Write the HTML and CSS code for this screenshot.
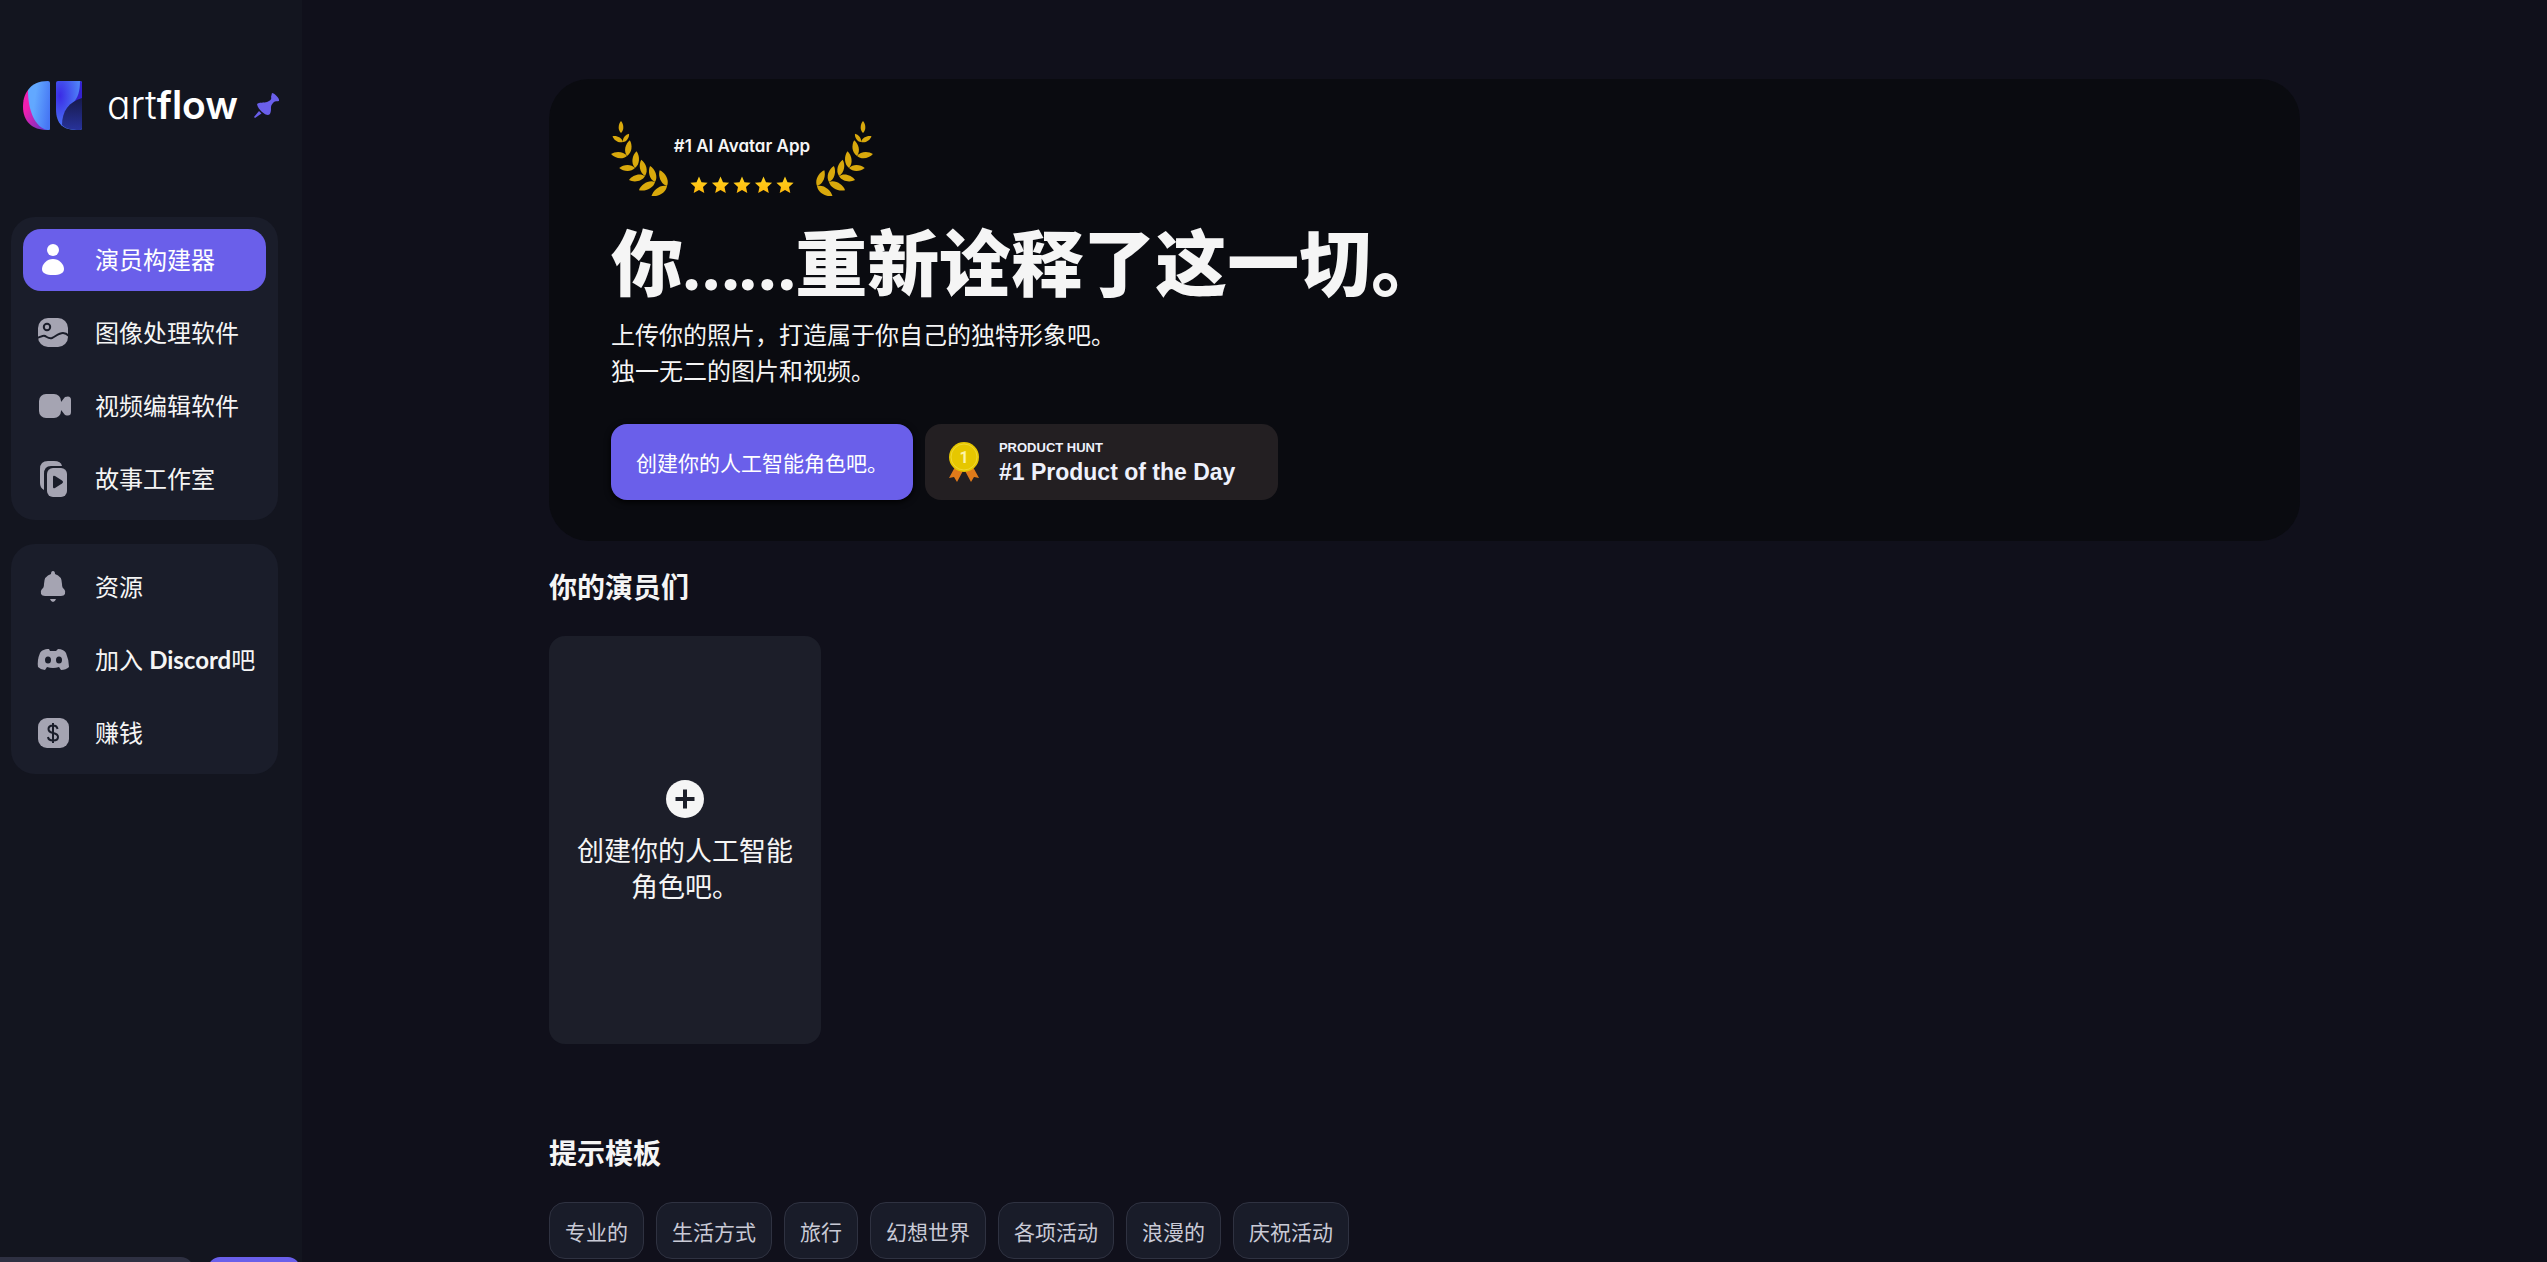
FILE: index.html
```html
<!DOCTYPE html>
<html lang="zh-CN">
<head>
<meta charset="utf-8">
<meta name="viewport" content="width=device-width, initial-scale=1">
<title>artflow</title>
<link rel="stylesheet" href="styles.css">
</head>
<body>
<svg class="defs" aria-hidden="true">
  <defs>
    <linearGradient id="lgBlue" x1="0" y1="0.3" x2="1" y2="0.6"><stop offset="0.3" stop-color="#62a8ff"/><stop offset="1" stop-color="#4676f4"/></linearGradient>
    <linearGradient id="lgPink" x1="0" y1="0" x2="1" y2="1"><stop offset="0.3" stop-color="#f01fb0"/><stop offset="1" stop-color="#5b35c4"/></linearGradient>
    <radialGradient id="lgRight" cx="0.15" cy="0.3" r="0.8"><stop offset="0" stop-color="#3a2be6"/><stop offset="1" stop-color="#4f86f8"/></radialGradient>
    <linearGradient id="lgDark" x1="0" y1="0" x2="0" y2="1"><stop offset="0" stop-color="#171a4a"/><stop offset="1" stop-color="#27329a"/></linearGradient>
    <linearGradient id="lgStar" x1="0" y1="0" x2="0" y2="1"><stop offset="0" stop-color="#ffd21f"/><stop offset="1" stop-color="#ffb90d"/></linearGradient>
    <path id="leaf" d="M0 0C-3.400 -3 -2.800 -9 0 -12C2.800 -9 3.400 -3 0 0Z"/>
    <g id="branch" fill="#d9a90c">
      <use href="#leaf" transform="translate(10 13)"/>
      <use href="#leaf" transform="translate(12 22) rotate(-61)"/>
      <use href="#leaf" transform="translate(12 22) rotate(36) scale(.86)"/>
      <use href="#leaf" transform="translate(16 36) rotate(10) scale(1.33)"/>
      <use href="#leaf" transform="translate(16 36) rotate(-83) scale(1.34)"/>
      <use href="#leaf" transform="translate(24 48) rotate(5) scale(1.4)"/>
      <use href="#leaf" transform="translate(24 48) rotate(-90) scale(1.31)"/>
      <use href="#leaf" transform="translate(34 56) rotate(-13) scale(1.38)"/>
      <use href="#leaf" transform="translate(34 56) rotate(-104) scale(1.38)"/>
      <use href="#leaf" transform="translate(44 62) rotate(-17) scale(1.4)"/>
      <use href="#leaf" transform="translate(44 62) rotate(-117) scale(1.5)"/>
      <use href="#leaf" transform="translate(56 66) rotate(-25) scale(1.44)"/>
      <use href="#leaf" transform="translate(56 66) rotate(-123) scale(1.54)"/>
    </g>
    <path id="star" d="M9 0.500L11.500 6.200L17.600 6.800L13 10.900L14.300 17L9 13.900L3.700 17L5 10.900L0.400 6.800L6.500 6.200Z"/>
  </defs>
</svg>
<div class="app">
  <aside class="sidebar">
    <header class="brand">
      <a class="logo" href="#">
        <svg width="60" height="50" viewBox="0 0 60 50" aria-hidden="true">
          <path d="M5 9C1 14 0 20 0 26C0 40 9 49 24 49Z" fill="url(#lgPink)"/>
          <path d="M27 2V48Q27 49 26 49H24C12 46 5 30 5 9C9 3 16 0 25 0Q27 0 27 2Z" fill="url(#lgBlue)"/>
          <path d="M33 2Q33 0 35 0H57Q59 0 59 2V47Q59 49 57 49H54C40 49 33 43 33 28Z" fill="url(#lgRight)"/>
          <path d="M57 0Q59 0 59 2V18L50 22C55 17 57 10 57 0Z" fill="#3422cf"/>
          <path d="M59 17V47Q59 49 57 49C48 49 43 48 39 44C39 30 46 21 59 17Z" fill="url(#lgDark)"/>
        </svg>
        <span class="wordmark">art<b>flow</b></span>
      </a>
      <button class="pin" type="button" aria-label="pin">
        <svg width="26" height="26" viewBox="0 0 26 26" fill="#6a5fea" aria-hidden="true">
          <path d="M18 0C20 0 26 5 25 8C23 8.500 21 8 20 9C17 12 17 13 17 16C17 19 16 22 14 22C11 22 4 17 3 11C5 9 10 10 13 9C16 8 18 6 17 4Z"/>
          <path d="M5 18L7.500 20.500L1 25L0 24Z"/>
        </svg>
      </button>
    </header>
    <nav class="group">
      <a class="item active" href="#">
        <svg class="icon" viewBox="0 0 36 36"><circle cx="18" cy="8" r="6"/><path d="M18 17C24 17 29 22 29 27C29 31 25 33 18 33C11 33 7 31 7 27C7 22 12 17 18 17Z"/></svg>
        <span>演员构建器</span></a>
      <a class="item" href="#">
        <svg class="icon" viewBox="0 0 36 36"><rect x="3" y="3" width="30" height="29" rx="10"/><circle class="cut-line" cx="12" cy="12" r="3.200"/><path class="cut-line" d="M2 23C6 22 8 20 10 21C12 22 14 24 17 23C21 21 24 18 28 18Q31 18 34 21"/></svg>
        <span>图像处理软件</span></a>
      <a class="item" href="#">
        <svg class="icon" viewBox="0 0 36 36"><rect x="4" y="6" width="22" height="24" rx="7"/><path d="M26 14L30 9Q36 7 36 12V24Q36 29 30 27L26 22Z"/></svg>
        <span>视频编辑软件</span></a>
      <a class="item" href="#">
        <svg class="icon" viewBox="0 0 36 36"><path d="M9 29Q5 27 5 22V8Q5 0 13 0H19Q26 0 27 5H16Q9 5 9 13Z"/><rect x="12" y="7" width="20" height="29" rx="6"/><path class="cut" d="M18 16Q18 14 20 15L27 19.500Q29 21 27 22.500L20 27Q18 28 18 26Z"/></svg>
        <span>故事工作室</span></a>
    </nav>
    <nav class="group">
      <a class="item" href="#">
        <svg class="icon" viewBox="0 0 36 36"><path d="M18 2Q20 2 20 5Q27 7 27 15Q27 19 29 20Q31 22 30 25Q29 27 26 27H10Q7 27 6 25Q5 22 7 20Q9 19 9 15Q9 7 16 5Q16 2 18 2ZM15 30H21Q20 33 18 33Q16 33 15 30Z"/></svg>
        <span>资源</span></a>
      <a class="item" href="#">
        <svg class="icon" viewBox="0 0 36 36"><path d="M14 7C9 7 6 9 5 11Q2 18 3 25Q6 28 10 28L12 25Q18 27 24 25L26 28Q31 28 34 25Q34 18 31 11C30 9 27 7 23 7L21 9H15Z"/><ellipse class="cut" cx="13" cy="18" rx="3" ry="3.500"/><ellipse class="cut" cx="24" cy="18" rx="3" ry="3.500"/></svg>
        <span>加入 <b>Discord</b>吧</span></a>
      <a class="item" href="#">
        <svg class="icon" viewBox="0 0 36 36"><rect x="3" y="3" width="31" height="30" rx="9"/><path class="cut-line" d="M22.500 14Q22 10.500 18 10.500Q13.500 10.500 13.500 14Q13.500 17 18 18Q23 19 23 22Q23 25.500 18 25.500Q13.500 25.500 13 22M18 8V28"/></svg>
        <span>赚钱</span></a>
    </nav>
    <div class="peek"><span class="peek-field"></span><span class="peek-action"></span></div>
  </aside>
  <main class="main">
    <div class="content">
    <section class="hero">
      <div class="award">
        <svg width="58" height="76" viewBox="0 0 58 76" aria-hidden="true"><use href="#branch"/></svg>
        <div class="award-body">
          <p>#1 AI Avatar App</p>
          <svg width="104" height="18" viewBox="0 0 104 18" fill="url(#lgStar)" aria-hidden="true"><use href="#star"/><use href="#star" x="21.500"/><use href="#star" x="43"/><use href="#star" x="64.500"/><use href="#star" x="86"/></svg>
        </div>
        <svg width="58" height="76" viewBox="0 0 58 76" aria-hidden="true"><use href="#branch" transform="translate(58 0) scale(-1 1)"/></svg>
      </div>
      <h1>你……重新诠释了这一切。</h1>
      <p class="lead">上传你的照片，打造属于你自己的独特形象吧。<br>独一无二的图片和视频。</p>
      <div class="actions">
        <button class="create" type="button">创建你的人工智能角色吧。</button>
        <a class="hunt" href="#">
          <svg width="30" height="40" viewBox="0 0 30 40" aria-hidden="true">
            <path d="M6 25L0 36L5 35L8 40L15 27L22 40L25 35L30 36L24 25Z" fill="#e07a1a"/>
            <circle cx="15" cy="15" r="15" fill="#e6c700"/><circle cx="15" cy="15" r="13" fill="none" stroke="#f0d832"/>
            <text class="medal-num" x="15" y="21" text-anchor="middle">1</text>
          </svg>
          <span class="hunt-text"><small>PRODUCT HUNT</small><strong>#1 Product of the Day</strong></span>
        </a>
      </div>
    </section>
    <section class="actors">
      <h2>你的演员们</h2>
      <button class="card" type="button">
        <svg width="38" height="38" viewBox="0 0 38 38" aria-hidden="true"><circle cx="19" cy="19" r="19" fill="#f5f5f5"/><path d="M19 9.500V28.500M9.500 19H28.500" stroke="#1c1e29" stroke-width="4"/></svg>
        <span>创建你的人工智能角色吧。</span>
      </button>
    </section>
    <section class="templates">
      <h2>提示模板</h2>
      <div class="chips">
        <button type="button">专业的</button><button type="button">生活方式</button><button type="button">旅行</button><button type="button">幻想世界</button><button type="button">各项活动</button><button type="button">浪漫的</button><button type="button">庆祝活动</button>
      </div>
    </section>
    </div>
  </main>
</div>
</body>
</html>
```
FILE: styles.css
```css
* { box-sizing: border-box; }
body {
  margin: 0;
  background: #10101b;
  color: #f5f5f5;
  font-family: Lato, "Noto Sans CJK SC", sans-serif;
}
h1, h2, p { margin: 0; }
a { color: inherit; text-decoration: none; }
button { border: 0; padding: 0; background: none; color: inherit; font: inherit; cursor: pointer; }
svg { display: block; flex: none; }
.defs { position: absolute; width: 0; height: 0; }
.app { display: flex; height: 100vh; overflow: hidden; }

.sidebar { display: flex; flex-direction: column; flex: none; width: 302px; padding: 81px 24px 0 11px; background: #13151f; }
.brand { display: flex; align-items: center; gap: 16px; height: 50px; margin-bottom: 86px; padding-left: 12px; }
.logo { display: flex; align-items: center; gap: 24px; }
.wordmark { padding-bottom: 3px; font: 300 39px/48px Inter, sans-serif; font-feature-settings: "cv11"; color: #fff; }
.wordmark b { font-weight: 600; }
.group { display: flex; flex-direction: column; gap: 11px; margin-bottom: 24px; padding: 12px 12px 10px; border-radius: 24px; background: #1a1d2a; }
.item { display: flex; align-items: center; gap: 24px; height: 62px; padding: 0 12px; border-radius: 18px; font-size: 24px; white-space: nowrap; }
.item span { padding-bottom: 3px; }
.active { background: #6a5fea; color: #fff; }
.icon { width: 36px; height: 36px; fill: #a5a4b2; }
.active .icon { fill: #fff; }
.icon .cut { fill: #1a1d2a; }
.icon .cut-line { fill: none; stroke: #1a1d2a; stroke-width: 2; }
.peek { display: flex; gap: 15px; height: 5px; margin: auto -22px 0 -11px; overflow: hidden; }
.peek-field { flex: 1; height: 48px; border-radius: 0 12px 0 0; background: #2e3042; }
.peek-action { width: 92px; height: 48px; border-radius: 12px; background: #6a5fea; }

.main { flex: 1; min-width: 0; padding-top: 79px; }
.content { width: 78%; margin: 0 auto; }
.hero { padding: 37px 62px 41px; border-radius: 40px; background: #0a0b10; }
.award { display: flex; justify-content: space-between; width: 262px; height: 80px; padding-top: 4px; }
.award-body { display: flex; flex-direction: column; align-items: center; gap: 20px; padding-top: 16px; }
.award-body p { font: 600 17px/20px Inter, sans-serif; font-feature-settings: "cv11"; white-space: nowrap; }
h1 { margin-top: 18px; font-size: 72px; line-height: 96px; font-weight: 900; }
.lead { font-size: 24px; line-height: 36px; margin-top: 7px; }
.actions { display: flex; gap: 12px; margin-top: 35px; }
.create { height: 76px; padding: 0 25px; border-radius: 16px; background: #6a5fea; color: #fff; font-size: 21px; box-shadow: 0 2px 6px #000; }
.hunt { display: flex; align-items: center; gap: 20px; width: 353px; height: 76px; padding-left: 24px; border-radius: 16px; background: #231f22; color: #eef1fc; font-family: "Liberation Sans", sans-serif; }
.hunt-text { display: flex; flex-direction: column; font-weight: 700; }
.hunt small { font-size: 13px; line-height: 20px; }
.hunt strong { font-size: 23px; line-height: 28px; }
.medal-num { font: 700 16px Roboto, sans-serif; fill: #fdf3a8; }

h2 { font-size: 28px; line-height: 40px; font-weight: 700; }
.actors { padding-top: 26px; }
.card { display: flex; flex-direction: column; align-items: center; justify-content: center; gap: 15px; width: 272px; height: 408px; margin-top: 29px; padding: 5px 16px 0; border-radius: 16px; background: #1c1e29; font-size: 27px; line-height: 36px; }
.templates { padding-top: 89px; }
.chips { display: flex; flex-wrap: wrap; gap: 12px; margin-top: 29px; }
.chips button { height: 57px; padding: 0 15px; border: 1px solid #2f3241; border-radius: 16px; background: #191c29; color: #c9cad6; font-size: 21px; }
```
